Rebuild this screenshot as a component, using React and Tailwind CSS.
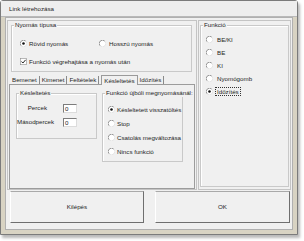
import React from 'react';

function Radio({ checked }) {
  return (
    <svg width="7" height="7" viewBox="0 0 12 12" className="shrink-0">
      <circle cx="6" cy="6" r="5.5" fill="#ffffff" />
      <path d="M10 2 A5.6 5.6 0 0 0 2 10" stroke="#7a7a7a" strokeWidth="1.3" fill="none" />
      <path d="M2 10 A5.6 5.6 0 0 0 10 2" stroke="#dcdcdc" strokeWidth="1.2" fill="none" />
      {checked && <circle cx="6" cy="6" r="2.2" fill="#111111" />}
    </svg>
  );
}

function Check() {
  return (
    <svg width="7" height="7" viewBox="0 0 12 12" className="shrink-0">
      <rect x="0.5" y="0.5" width="11" height="11" fill="#ffffff" stroke="#8a8a8a" />
      <path d="M2.5 6 L5 8.6 L9.6 3.2" stroke="#111111" strokeWidth="1.6" fill="none" />
    </svg>
  );
}

function Group({ label, className, children }) {
  return (
    <div className={`relative border border-[#c9c9c9] shadow-[inset_1px_1px_0_#ffffff] ${className}`}>
      <span className="absolute -top-[5px] left-[2px] bg-[#f0f0f0] px-[1px] leading-[8px] whitespace-nowrap">{label}</span>
      {children}
    </div>
  );
}

export default function App() {
  const tabs = ['Bemenet', 'Kimenet', 'Feltételek', 'Késleltetés', 'Időzítés'];
  const funkcio = ['BE/KI', 'BE', 'KI', 'Nyomógomb', 'Időzítés'];
  const ujboli = ['Késleltetett visszatöltés', 'Stop', 'Csatolás megváltozása', 'Nincs funkció'];

  return (
    <div className="w-[304px] h-[241px] bg-white text-[6.2px] text-[#1e1e1e] font-['Liberation_Sans',Arial,sans-serif]">
      <div className="w-[298px] h-[235px] border border-[#7b7b7b] rounded-t-[3px] bg-[#d8d3c3] flex flex-col shadow-[2px_3px_3px_rgba(0,0,0,0.28)]">
        {/* title bar */}
        <div className="h-[16px] bg-[#eeeeee] flex items-center pl-[8px] border-b border-[#b9b9b9]">
          Link létrehozása
        </div>

        <div className="ml-[4px] mr-[4px] mb-[4px] flex-1 bg-[#f0f0f0] border border-[#b0b0b0] flex flex-col">
          <div className="flex pt-[2px] pl-[1px] gap-[1px]">
            {/* left column */}
            <div className="w-[190px] h-[170px] border border-[#c4c4c4] flex flex-col">
              <Group label="Nyomás típusa" className="ml-[3px] mt-[4px] w-[181px] h-[47px]">
                <div className="flex items-center mt-[13px] ml-[8px] h-[9px]">
                  <Radio checked />
                  <span className="ml-[2px] w-[70px]">Rövid nyomás</span>
                  <Radio />
                  <span className="ml-[3px]">Hosszú nyomás</span>
                </div>
                <div className="flex items-center mt-[9px] ml-[8px] h-[9px]">
                  <Check />
                  <span className="ml-[2px]">Funkció végrehajtása a nyomás után</span>
                </div>
              </Group>

              <div className="flex items-end ml-[2px] mt-[2px] h-[10px]">
                {tabs.map((t) =>
                  t === 'Késleltetés' ? (
                    <div key={t} className="h-[10px] px-[2px] ml-[2px] border-t border-l border-r border-[#9a9a9a] bg-[#f0f0f0] leading-[9px] -mb-[1px] relative z-10">
                      {t}
                    </div>
                  ) : (
                    <div key={t} className="h-[8px] px-[2px] border-r border-[#8a8a8a] leading-[8px]">
                      {t}
                    </div>
                  )
                )}
              </div>

              <div className="ml-[1px] w-[186px] h-[105px] border border-[#9c9c9c] flex items-start pt-[8px] pl-[6px] gap-[5px]">
                <Group label="Késleltetés" className="w-[81px] h-[46px]">
                  <div className="flex items-center mt-[9px] h-[10px]">
                    <span className="w-[30px] text-right">Percek</span>
                    <div className="ml-[16px] w-[14px] h-[9px] bg-white border border-t-[#7c7c7c] border-l-[#7c7c7c] border-r-[#dcdcdc] border-b-[#dcdcdc] leading-[7px] pl-[1px]">0</div>
                  </div>
                  <div className="flex items-center mt-[4px] h-[10px]">
                    <span className="w-[30px] text-right">Másodpercek</span>
                    <div className="ml-[16px] w-[14px] h-[9px] bg-white border border-t-[#7c7c7c] border-l-[#7c7c7c] border-r-[#dcdcdc] border-b-[#dcdcdc] leading-[7px] pl-[1px]">0</div>
                  </div>
                </Group>
                <Group label="Funkció újbóli megnyomásánál:" className="w-[81px] h-[69px]">
                  <div className="flex flex-col gap-[5px] mt-[11px] ml-[5px]">
                    {ujboli.map((u, i) => (
                      <div key={u} className="flex items-center h-[9px]">
                        <Radio checked={i === 0} />
                        <span className="ml-[2px] whitespace-nowrap">{u}</span>
                      </div>
                    ))}
                  </div>
                </Group>
              </div>
            </div>

            {/* right column */}
            <div className="w-[93px] h-[170px] border border-[#c4c4c4] flex flex-col">
              <Group label="Funkció" className="ml-[1px] mt-[4px] w-[89px] h-[162px]">
                <div className="flex flex-col gap-[4px] mt-[9px] ml-[5px]">
                  {funkcio.map((f, i) => (
                    <div key={f} className="flex items-center h-[9px]">
                      <Radio checked={i === 4} />
                      <span className={`ml-[2px] px-[1px] leading-[7px] ${i === 4 ? 'border border-dotted border-[#333]' : 'border border-transparent'}`}>{f}</span>
                    </div>
                  ))}
                </div>
              </Group>
            </div>
          </div>

          {/* buttons */}
          <div className="flex mt-[1px] ml-[4px] gap-[11px]">
            <button className="w-[134px] h-[32px] bg-[#f0f0f0] border border-t-[#a9a9a9] border-l-[#ffffff] border-r-[#6f6f6f] border-b-[#6f6f6f]">Kilépés</button>
            <button className="w-[135px] h-[32px] bg-[#f0f0f0] border border-t-[#a9a9a9] border-l-[#ffffff] border-r-[#6f6f6f] border-b-[#6f6f6f]">OK</button>
          </div>
        </div>
      </div>
    </div>
  );
}
